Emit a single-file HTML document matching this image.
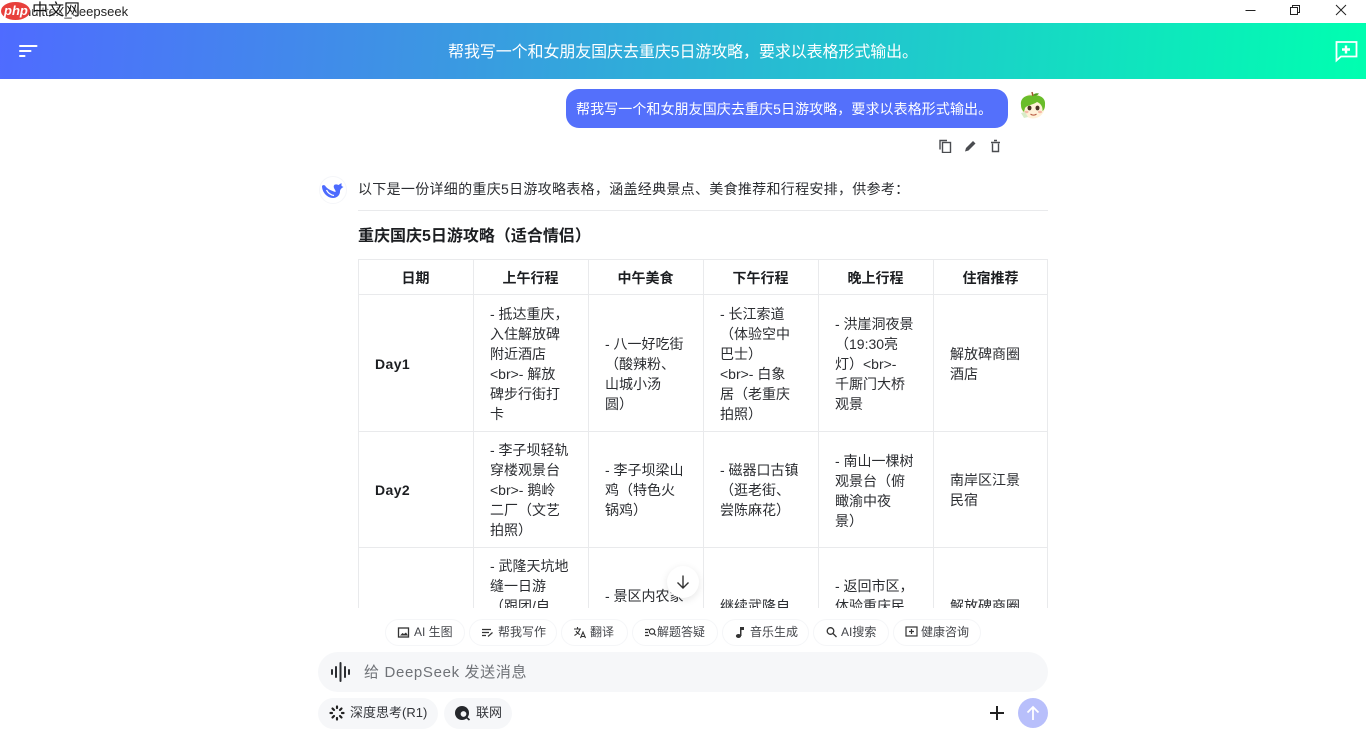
<!DOCTYPE html>
<html lang="zh">
<head>
<meta charset="utf-8">
<title>deepseek</title>
<style>
*{box-sizing:border-box;margin:0;padding:0}
html,body{width:1366px;height:738px;overflow:hidden;background:#fff}
body{position:relative;font-family:"Liberation Sans","Noto Sans CJK SC",sans-serif;color:#26282c;font-size:14px}
.a{position:absolute;white-space:nowrap}
.t{position:absolute;white-space:nowrap;line-height:20px;font-size:14px;color:#2b2d31}
.b{font-weight:700;color:#1c1e21}
.vl{position:absolute;width:1px;background:#e9eaec}
.hl{position:absolute;height:1px;background:#e9eaec}
.chip{position:absolute;top:619px;height:27px;border:1px solid #f5f6f8;border-radius:14px;background:#fff;font-size:12px;line-height:25px;color:#44464b;white-space:nowrap}
.chip svg{position:absolute;top:6px;left:11px}
.chip span{position:absolute;top:0;white-space:nowrap}
</style>
</head>
<body>
<!-- title bar -->
<div class="a" style="left:24px;top:4px;font-size:13px;line-height:16px;color:#222">nuitteX_deepseek</div>
<div class="a" style="left:1px;top:2px;width:29px;height:18px;border-radius:50%;background:#e8403c"></div>
<div class="a" style="left:4px;top:3px;font:italic 700 13px/16px 'Liberation Sans',sans-serif;color:#fff">php</div>
<div class="a" style="left:32px;top:0;font-size:16px;line-height:21px;color:#111;text-shadow:0 0 2px #fff,0 0 2px #fff,0 0 1px #fff">中文网</div>
<svg class="a" style="left:1240px;top:0" width="126" height="23" fill="none" stroke="#222" stroke-width="1">
  <path d="M5.500 10.500H15.500"/>
  <path d="M50.500 7.500H57.500V14.500H50.500ZM52.500 7.500V5.500H59.500V12.500H57.500"/>
  <path d="M96 5L106 15M106 5L96 15"/>
</svg>

<!-- header -->
<div class="a" style="left:0;top:23px;width:1366px;height:56px;background:linear-gradient(95deg,#4f6bff 0%,#3d94e4 30%,#20c8cd 65%,#00ffb0 100%)"></div>
<svg class="a" style="left:18px;top:44px" width="20" height="14" fill="#fff">
  <rect x="1" y="1" width="18.500" height="2" rx="1"/>
  <rect x="1" y="6" width="12.500" height="2" rx="1"/>
  <rect x="1" y="11" width="6.500" height="2" rx="1"/>
</svg>
<div class="a" style="left:383px;width:600px;top:41px;text-align:center;color:#fff;font-size:16px;line-height:23px;letter-spacing:-.1px">帮我写一个和女朋友国庆去重庆5日游攻略，要求以表格形式输出。</div>
<svg class="a" style="left:1334px;top:40px" width="24" height="24" fill="none">
  <path d="M2.500 2H22.500V16.500H7L2.500 20.500Z" stroke="#fff" stroke-width="1.800" stroke-linejoin="miter"/>
  <path d="M12 5.500V13.500M8 9.500H16" stroke="#fff" stroke-width="2.400"/>
</svg>

<!-- user bubble -->
<div class="a" style="left:566px;top:89px;width:442px;height:39px;border-radius:13px;background:#5470fb"></div>
<div class="a" style="left:576px;top:98px;color:#fff;font-size:14px;line-height:22px;letter-spacing:.08px">帮我写一个和女朋友国庆去重庆5日游攻略，要求以表格形式输出。</div>
<svg class="a" style="left:1019px;top:90px" width="28" height="30">
  <ellipse cx="14" cy="16" rx="12" ry="12.500" fill="#fff1d8"/>
  <path d="M2 15C1 8 7 4.500 14 5.500C21 4.500 27 8 26 15C26 18 25 20 23.500 21C24 16 21 13 18 12C14 15 8 15 6 18L5 22C3 20 2 18 2 15Z" fill="#69bd2a"/>
  <path d="M14 6L13 2" stroke="#a0522d" stroke-width="1.500"/>
  <path d="M14 5C16 3 18 3 20 3.500C18 6 16 6 14 5Z" fill="#4f9e1c"/>
  <ellipse cx="10.500" cy="18" rx="2" ry="2.400" fill="#4a3325"/>
  <ellipse cx="18.500" cy="18" rx="2" ry="2.400" fill="#4a3325"/>
  <ellipse cx="7.500" cy="22" rx="2" ry="1.200" fill="#f7b9a8"/>
  <ellipse cx="21" cy="22" rx="2" ry="1.200" fill="#f7b9a8"/>
  <path d="M11.500 24C13 25.500 16 25.500 17.500 24" stroke="#b5533c" stroke-width="1" fill="none"/>
  <path d="M2 23L6 22L9 27L5 28Z" fill="#d8ecc8"/>
</svg>
<!-- bubble actions -->
<svg class="a" style="left:938px;top:139px" width="64" height="14" fill="none" stroke="#4a4c50" stroke-width="1.400">
  <path d="M2 10.500V1.500H9"/>
  <rect x="4.500" y="3.500" width="8" height="10" />
  <path d="M27 12.500L28 9L35 2L37.500 4.500L30.500 11.500Z" fill="#4a4c50" stroke="none"/>
  <path d="M54.500 4.500V12.500H60.500V4.500" />
  <path d="M53 3.500H62M56 1.500H59" />
</svg>

<!-- assistant -->
<svg class="a" style="left:319px;top:176px" width="28" height="28">
  <circle cx="14" cy="14" r="13.500" fill="#fff" stroke="#f5f6f9"/>
  <path d="M3 10C3 16 8 22 14 22C18 22 21 19 21 15.500C21 13.500 22.500 12 24.500 11L22.500 10L22.500 7L19.500 9C16 7.500 14 9 15 12C16 14 17 15 16.500 16C13 15 8 13 6 9.500C5 9 3.500 9 3 10Z" fill="#4d6bfe"/>
  <path d="M7.500 14C9 17 12 19 15 19.500" stroke="#fff" stroke-width="1.300" fill="none"/>
</svg>
<div class="t" style="left:358px;top:179px;letter-spacing:.3px">以下是一份详细的重庆5日游攻略表格，涵盖经典景点、美食推荐和行程安排，供参考：</div>
<div class="hl" style="left:358px;top:210px;width:690px"></div>
<div class="a b" style="left:358px;top:225px;font-size:16px;line-height:24px">重庆国庆5日游攻略（适合情侣）</div>

<!-- table -->
<div class="a" style="left:0;top:0;width:1366px;height:608px;overflow:hidden">
  <div class="hl" style="left:358px;top:259px;width:690px"></div>
  <div class="hl" style="left:358px;top:294px;width:690px"></div>
  <div class="hl" style="left:358px;top:431px;width:690px"></div>
  <div class="hl" style="left:358px;top:547px;width:690px"></div>
  <div class="vl" style="left:358px;top:259px;height:349px"></div>
  <div class="vl" style="left:473px;top:259px;height:349px"></div>
  <div class="vl" style="left:588px;top:259px;height:349px"></div>
  <div class="vl" style="left:703px;top:259px;height:349px"></div>
  <div class="vl" style="left:818px;top:259px;height:349px"></div>
  <div class="vl" style="left:933px;top:259px;height:349px"></div>
  <div class="vl" style="left:1047px;top:259px;height:349px"></div>

  <div class="t b" style="left:358px;width:115px;text-align:center;top:268px">日期</div>
  <div class="t b" style="left:473px;width:115px;text-align:center;top:268px">上午行程</div>
  <div class="t b" style="left:588px;width:115px;text-align:center;top:268px">中午美食</div>
  <div class="t b" style="left:703px;width:115px;text-align:center;top:268px">下午行程</div>
  <div class="t b" style="left:818px;width:115px;text-align:center;top:268px">晚上行程</div>
  <div class="t b" style="left:933px;width:115px;text-align:center;top:268px">住宿推荐</div>

  <div class="t b" style="left:375px;top:354px;letter-spacing:.4px">Day1</div>
  <div class="t" style="left:490px;top:304px">- 抵达重庆，<br>入住解放碑<br>附近酒店<br>&lt;br&gt;- 解放<br>碑步行街打<br>卡</div>
  <div class="t" style="left:605px;top:334px">- 八一好吃街<br>（酸辣粉、<br>山城小汤<br>圆）</div>
  <div class="t" style="left:720px;top:304px">- 长江索道<br>（体验空中<br>巴士）<br>&lt;br&gt;- 白象<br>居（老重庆<br>拍照）</div>
  <div class="t" style="left:835px;top:314px">- 洪崖洞夜景<br>（19:30亮<br>灯）&lt;br&gt;-<br>千厮门大桥<br>观景</div>
  <div class="t" style="left:950px;top:344px">解放碑商圈<br>酒店</div>

  <div class="t b" style="left:375px;top:480px;letter-spacing:.4px">Day2</div>
  <div class="t" style="left:490px;top:440px">- 李子坝轻轨<br>穿楼观景台<br>&lt;br&gt;- 鹅岭<br>二厂（文艺<br>拍照）</div>
  <div class="t" style="left:605px;top:460px">- 李子坝梁山<br>鸡（特色火<br>锅鸡）</div>
  <div class="t" style="left:720px;top:460px">- 磁器口古镇<br>（逛老街、<br>尝陈麻花）</div>
  <div class="t" style="left:835px;top:451px">- 南山一棵树<br>观景台（俯<br>瞰渝中夜<br>景）</div>
  <div class="t" style="left:950px;top:470px">南岸区江景<br>民宿</div>

  <div class="t" style="left:490px;top:556px">- 武隆天坑地<br>缝一日游<br>（跟团/自</div>
  <div class="t" style="left:605px;top:586px">- 景区内农家</div>
  <div class="t" style="left:720px;top:596px">继续武隆自</div>
  <div class="t" style="left:835px;top:576px">- 返回市区，<br>体验重庆民</div>
  <div class="t" style="left:950px;top:596px">解放碑商圈</div>
</div>

<!-- scroll button -->
<div class="a" style="left:667px;top:566px;width:32px;height:32px;border-radius:50%;background:#fff;box-shadow:0 2px 8px rgba(0,0,0,.10)"></div>
<svg class="a" style="left:675px;top:574px" width="16" height="16" fill="none" stroke="#333" stroke-width="1.400">
  <path d="M8 1.500V14M2.500 8.500L8 14L13.500 8.500"/>
</svg>

<!-- chips -->
<div class="chip" style="left:385px;width:80px">
  <svg width="13" height="13" fill="none" stroke="#333" stroke-width="1.300"><rect x="1.500" y="2" width="10" height="9"/><path d="M3 9.500L5.500 7L7 8L9 6.500L11 9.500Z" fill="#333" stroke="none"/></svg>
  <span style="left:28px">AI 生图</span>
</div>
<div class="chip" style="left:469px;width:88px">
  <svg width="13" height="13" fill="none" stroke="#333" stroke-width="1.200"><path d="M1 3.500H10M1 6.500H8M1 9.500H5M7 10.500L11.500 6.500"/></svg>
  <span style="left:28px">帮我写作</span>
</div>
<div class="chip" style="left:561px;width:67px">
  <svg width="14" height="13" fill="none" stroke="#333" stroke-width="1.100"><path d="M1 3H8M4.500 1V3M7 3C6 6 4 8 1.500 9.500M3 5C4 7 5.500 8 7 8.500M7.500 12L10 6L12.500 12M8.500 10.500H11.500"/></svg>
  <span style="left:28px">翻译</span>
</div>
<div class="chip" style="left:632px;width:86px">
  <svg width="13" height="13" fill="none" stroke="#333" stroke-width="1.200"><path d="M1 3.500H5M1 6.500H4M1 9.500H5"/><circle cx="8" cy="5.500" r="2.600"/><path d="M10 7.500L12 9.500"/></svg>
  <span style="left:24px">解题答疑</span>
</div>
<div class="chip" style="left:722px;width:87px">
  <svg width="13" height="13" fill="#333" stroke="none"><ellipse cx="4.500" cy="10" rx="2.600" ry="2"/><rect x="6" y="1" width="1.500" height="9"/><path d="M6 1L10 1V4L6 4Z"/></svg>
  <span style="left:27px">音乐生成</span>
</div>
<div class="chip" style="left:813px;width:76px">
  <svg width="13" height="13" fill="none" stroke="#333" stroke-width="1.300"><circle cx="5.500" cy="5" r="3.300"/><path d="M8 7.500L11.500 11"/></svg>
  <span style="left:27px">AI搜索</span>
</div>
<div class="chip" style="left:893px;width:88px">
  <svg width="14" height="13" fill="none" stroke="#333" stroke-width="1.200"><rect x="1" y="1" width="11" height="9"/><path d="M6.500 3V8M4 5.500H9"/></svg>
  <span style="left:27px">健康咨询</span>
</div>

<!-- input -->
<div class="a" style="left:318px;top:652px;width:730px;height:40px;border-radius:20px;background:#f6f7f9"></div>
<svg class="a" style="left:330px;top:661px" width="22" height="22" stroke="#2b2d31" stroke-width="2" stroke-linecap="round">
  <path d="M2 9V13M6 6V16M10.500 2V20M15 6V16M19 9V13"/>
</svg>
<div class="a" style="left:364px;top:662px;font-size:15px;line-height:22px;color:#6f7277;letter-spacing:.65px">给 DeepSeek 发送消息</div>

<!-- bottom buttons -->
<div class="a" style="left:318px;top:698px;width:120px;height:31px;border-radius:16px;background:#f6f7f9"></div>
<svg class="a" style="left:329px;top:705px" width="16" height="16" stroke="#222" stroke-width="2.200" stroke-linecap="round">
  <path d="M8 1.500V3M8 13V14.500M1.500 8H3M13 8H14.500M3.500 3.500L5 5M11 11L12.500 12.500M12.500 3.500L11 5M5 11L3.500 12.500" />
</svg>
<div class="a" style="left:350px;top:703px;font-size:13px;line-height:20px;color:#33353a">深度思考(R1)</div>
<div class="a" style="left:444px;top:698px;width:68px;height:31px;border-radius:16px;background:#f6f7f9"></div>
<svg class="a" style="left:454px;top:705px" width="17" height="17" fill="none">
  <circle cx="8" cy="8" r="7" fill="#26282c"/>
  <circle cx="9.500" cy="9" r="3.500" fill="#f5f6f8" stroke="#26282c" stroke-width="1.300"/>
  <path d="M12 12L15.500 15" stroke="#26282c" stroke-width="1.800"/>
</svg>
<div class="a" style="left:476px;top:703px;font-size:13px;line-height:20px;color:#33353a">联网</div>
<svg class="a" style="left:988px;top:704px" width="18" height="18" stroke="#222" stroke-width="2"><path d="M9 2V16M2 9H16"/></svg>
<div class="a" style="left:1018px;top:698px;width:30px;height:30px;border-radius:50%;background:#b8bffb"></div>
<svg class="a" style="left:1024px;top:704px" width="18" height="18" fill="none" stroke="#fff" stroke-width="1.800"><path d="M9 16V3M3.500 8.500L9 3L14.500 8.500"/></svg>
</body>
</html>
